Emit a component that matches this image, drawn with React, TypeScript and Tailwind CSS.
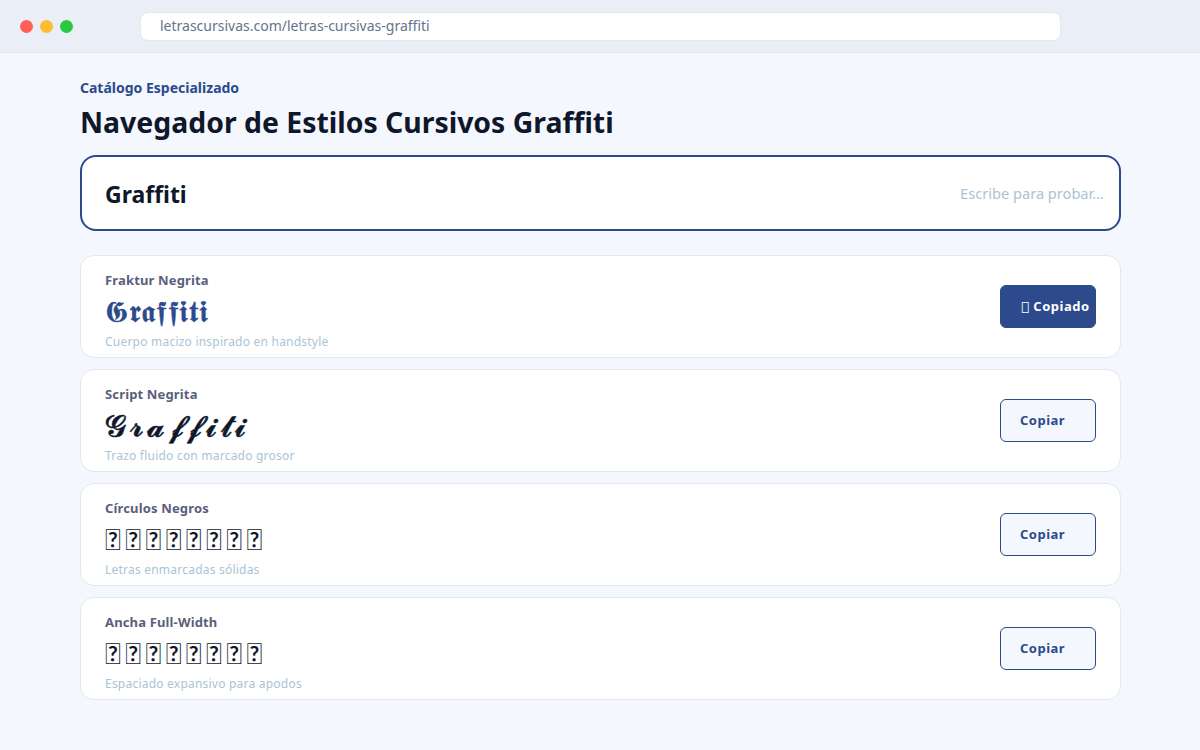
const sans = "font-['Noto_Sans','Open_Sans',sans-serif]";

const styles = [
  { name: 'Fraktur Negrita', sample: '𝕲𝖗𝖆𝖋𝖋𝖎𝖙𝖎', note: 'Cuerpo macizo inspirado en handstyle', sampleClass: 'text-[#2c4a8c] text-[30px] font-normal tracking-[0.7px] [-webkit-text-stroke:0.5px_#2c4a8c]', copied: true },
  { name: 'Script Negrita', sample: '𝓖𝓻𝓪𝓯𝓯𝓲𝓽𝓲', note: 'Trazo fluido con marcado grosor', sampleClass: 'text-[#0f172a] text-[30px] font-normal tracking-[3.6px] [-webkit-text-stroke:0.5px_#0f172a]', copied: false },
  { name: 'Círculos Negros', sample: '\uE000\uE000\uE000\uE000\uE000\uE000\uE000\uE000', note: 'Letras enmarcadas sólidas', sampleClass: "text-[#0f172a] text-[29px] font-normal tracking-[4.8px] font-['Lato']", copied: false },
  { name: 'Ancha Full-Width', sample: '\uE000\uE000\uE000\uE000\uE000\uE000\uE000\uE000', note: 'Espaciado expansivo para apodos', sampleClass: "text-[#0f172a] text-[29px] font-normal tracking-[4.8px] font-['Lato']", copied: false },
];

export default function App() {
  return (
    <div className={`h-[750px] w-[1200px] overflow-hidden bg-[#f4f7fe] ${sans}`}>
      <div className="flex h-[53px] items-center border-b border-[#e2e8f0] bg-[#e9eef7] pl-5">
        <div className="flex w-[120px] gap-[7px]">
          <span className="size-[13px] rounded-full bg-[#ff5f57]" />
          <span className="size-[13px] rounded-full bg-[#febc2e]" />
          <span className="size-[13px] rounded-full bg-[#28c840]" />
        </div>
        <div className="flex h-[29px] w-[921px] items-center rounded-lg border border-[#e2e8f0] bg-white pl-[19px] text-sm text-[#64748b]">
          letrascursivas.com/letras-cursivas-graffiti
        </div>
      </div>
      <div className="ml-20 w-[1041px] pt-[25px]">
        <p className="text-sm font-bold leading-[20px] text-[#2c4a8c]">Catálogo Especializado</p>
        <h1 className="mt-[5px] text-[28.4px] font-bold leading-[38px] text-[#0f172a]">Navegador de Estilos Cursivos Graffiti</h1>
        <div className="mt-[14px] flex h-[76px] items-center justify-between rounded-2xl border-2 border-[#2c4a8c] bg-white pl-[23px] pr-[15px]">
          <span className="pt-[2px] text-[23px] font-bold text-[#0f172a]">Graffiti</span>
          <span className="pt-[2px] text-[14.6px] text-[#a9c4d6]">Escribe para probar...</span>
        </div>
        <div className="mt-6 flex flex-col gap-[11px]">
          {styles.map((s) => (
            <div key={s.name} className="flex h-[103px] items-center justify-between rounded-[14px] border border-[#e2e8f0] bg-white px-6">
              <div className="pt-[8px]">
                <p className="text-[13px] font-bold leading-[18px] tracking-[0.15px] text-[#5a607c]">{s.name}</p>
                <p className={`mt-[4px] leading-[36px] ${s.sampleClass}`}>{s.sample}</p>
                <p className="mt-[5px] text-xs leading-[16px] tracking-[0.22px] text-[#a9c4d6]">{s.note}</p>
              </div>
              {s.copied ? (
                <button className="flex h-[43px] w-24 items-center rounded-md border border-[#2c4a8c] bg-[#2c4a8c] pl-5 text-[13px] font-bold tracking-[0.5px] text-white">
                  <span className="mr-[4px] font-['DejaVu_Sans'] font-normal">{'\uE000'}</span>Copiado
                </button>
              ) : (
                <button className="flex h-[43px] w-24 items-center rounded-md border border-[#2c4a8c] bg-[#f4f7fe] pl-[19px] text-[13px] font-bold tracking-[0.5px] text-[#2c4a8c]">Copiar</button>
              )}
            </div>
          ))}
        </div>
      </div>
    </div>
  );
}
